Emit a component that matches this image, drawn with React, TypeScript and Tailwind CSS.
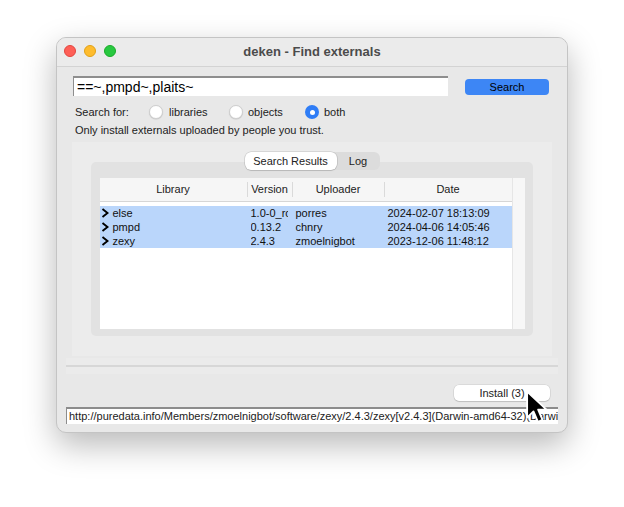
import React from "react";

const rows = [
  { lib: "else", ver: "1.0-0_rc", up: "porres", date: "2024-02-07 18:13:09" },
  { lib: "pmpd", ver: "0.13.2", up: "chnry", date: "2024-04-06 14:05:46" },
  { lib: "zexy", ver: "2.4.3", up: "zmoelnigbot", date: "2023-12-06 11:48:12" },
];

function Radio({ on }: { on?: boolean }) {
  if (on)
    return (
      <span className="w-[14px] h-[14px] rounded-full bg-[#2f7df6] flex items-center justify-center shrink-0">
        <span className="w-[5px] h-[5px] rounded-full bg-white" />
      </span>
    );
  return <span className="w-[14px] h-[14px] rounded-full bg-white border border-[#cfcfcf] shadow-[0_0.5px_1px_rgba(0,0,0,0.15)] shrink-0" />;
}

function Chevron() {
  return (
    <svg width="8" height="10" viewBox="0 0 8 10" className="shrink-0">
      <path d="M1.5 1 L6.5 5 L1.5 9" fill="none" stroke="#000" strokeWidth="1.9" />
    </svg>
  );
}

export default function App() {
  return (
    <div
      className="relative w-[624px] h-[507px] bg-white pt-[37px] pl-[56px] text-[#1f1f1f] overflow-hidden"
      style={{ fontFamily: '"Liberation Sans", Arial, sans-serif' }}
    >
      <div className="w-[512px] h-[396px] rounded-[10px] bg-[#e8e8e8] border border-[#c4c4c4] shadow-[0_12px_32px_rgba(0,0,0,0.28)] overflow-hidden flex flex-col">
        {/* title bar */}
        <div className="relative h-[29px] shrink-0 bg-[#ebebeb] border-b border-[#d3d3d3] flex items-center justify-center">
          <div className="absolute left-[7px] top-[7px] flex gap-[8px]">
            <span className="w-[12px] h-[12px] rounded-full bg-[#fe5f57] border border-[#e2463f]" />
            <span className="w-[12px] h-[12px] rounded-full bg-[#febc2e] border border-[#e1a116]" />
            <span className="w-[12px] h-[12px] rounded-full bg-[#28c840] border border-[#1aab29]" />
          </div>
          <span className="text-[13px] font-bold text-[#4b4b4b]">deken - Find externals</span>
        </div>

        <div className="flex flex-col px-[16px]">
          {/* search row */}
          <div className="flex items-start mt-[9px]">
            <div className="w-[375px] h-[20px] bg-white border-t-2 border-l border-[#8e8e8e] flex items-center pl-[3px] text-[14px] text-black leading-none">
              ==~,pmpd~,plaits~
            </div>
            <button className="ml-[17px] mt-[3px] w-[84px] h-[16px] rounded-[4px] bg-[#3d86f5] text-[11px] text-black leading-none flex items-center justify-center">
              Search
            </button>
          </div>

          {/* search for */}
          <div className="flex items-center mt-[9px] h-[14px] text-[11px] text-[#222]">
            <span className="w-[76px] pl-[2px]">Search for:</span>
            <div className="w-[80px] flex items-center gap-[6px]">
              <Radio />
              <span>libraries</span>
            </div>
            <div className="w-[76px] flex items-center gap-[5px]">
              <Radio />
              <span>objects</span>
            </div>
            <div className="flex items-center gap-[5px]">
              <Radio on />
              <span>both</span>
            </div>
          </div>

          <div className="mt-[4px] h-[14px] pl-[2px] text-[11px] text-[#222] flex items-center">
            Only install externals uploaded by people you trust.
          </div>

          {/* notebook */}
          <div className="mt-[5px] ml-[-1px] w-[480px] h-[214px] bg-[#ececec] px-[19px] pt-[20px] pb-[20px]">
            <div className="h-full rounded-[5px] bg-[#e2e2e2] flex flex-col items-center px-[8px]">
              <div className="-mt-[10px] h-[18px] flex rounded-[6px] bg-[#dcdcdc] text-[11px] text-[#222]">
                <div className="w-[92px] h-[18px] rounded-[6px] bg-white shadow-[0_0_0_0.5px_rgba(0,0,0,0.18),0_1px_1px_rgba(0,0,0,0.1)] flex items-center justify-center">
                  Search Results
                </div>
                <div className="w-[43px] h-[18px] flex items-center justify-center">Log</div>
              </div>

              <div className="mt-[8px] w-[425px] h-[151px] flex bg-white">
                <div className="w-[412px] flex flex-col">
                  <div className="h-[24px] bg-[#f6f6f6] border-b border-[#d6d6d6] flex text-[11px] text-[#222]">
                    <div className="w-[147px] flex items-center justify-center">Library</div>
                    <div className="w-[45px] flex items-center border-l border-[#dadada] my-[4px] justify-center">Version</div>
                    <div className="w-[92px] flex items-center border-l border-[#dadada] my-[4px] justify-center">Uploader</div>
                    <div className="w-[128px] flex items-center border-l border-[#dadada] my-[4px] justify-center">Date</div>
                  </div>
                  <div className="mt-[4px] flex flex-col text-[11px] text-[#111]">
                    {rows.map((r) => (
                      <div key={r.lib} className="h-[14px] bg-[#bad6fb] flex items-center leading-none">
                        <div className="w-[147px] flex items-center gap-[4px] pl-[1px]">
                          <Chevron />
                          <span>{r.lib}</span>
                        </div>
                        <div className="w-[45px] pl-[4px] pr-[4px]">
                          <div className="overflow-hidden whitespace-nowrap">{r.ver}</div>
                        </div>
                        <div className="w-[92px] pl-[4px] whitespace-nowrap">{r.up}</div>
                        <div className="w-[128px] pl-[4px] whitespace-nowrap">{r.date}</div>
                      </div>
                    ))}
                  </div>
                </div>
                <div className="w-[13px] bg-[#f7f7f7] border-l border-[#e6e6e6]" />
              </div>
            </div>
          </div>

          {/* separator band */}
          <div className="mt-[2px] ml-[-7px] w-[492px] h-[16px] bg-[#ebebeb] pt-[7px]">
            <div className="h-[2px] bg-[#d7d7d7]" />
          </div>

          <button className="self-end mr-[1px] mt-[11px] w-[96px] h-[16px] rounded-[5px] bg-white shadow-[0_0_0_0.5px_rgba(0,0,0,0.12),0_1px_1px_rgba(0,0,0,0.12)] text-[11px] text-[#222] leading-none flex items-center justify-center">
            Install (3)
          </button>

          <div className="mt-[6px] ml-[-7px] w-[492px] h-[17px] bg-white border-t-2 border-l border-[#8c8c8c] pl-[2px] text-[11px] text-[#222] whitespace-nowrap overflow-hidden flex items-center">
            http://puredata.info/Members/zmoelnigbot/software/zexy/2.4.3/zexy[v2.4.3](Darwin-amd64-32)(Darwin-arm64-32)(Linux-amd64-32).dek
          </div>
        </div>
      </div>

      {/* mouse pointer */}
      <svg className="absolute left-[525px] top-[389px]" width="24" height="36" viewBox="0 0 17 25">
        <path
          d="M1.5 1.5 L1.5 20 L6 15.6 L9.2 23 L12.4 21.6 L9.3 14.4 L15.2 14.4 Z"
          fill="#000"
          stroke="#fff"
          strokeWidth="1.3"
          strokeLinejoin="round"
        />
      </svg>
    </div>
  );
}
